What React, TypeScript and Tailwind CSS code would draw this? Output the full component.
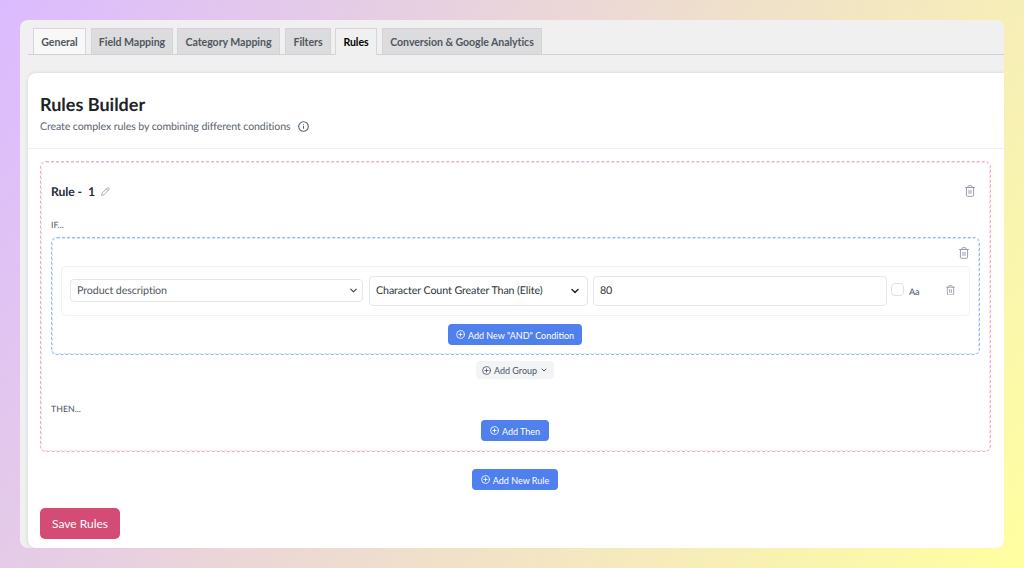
import React from "react";
import clsx from "clsx";
import { ChevronDown } from "lucide-react";

interface Tab {
  label: string;
  className: string;
}

const tabs: Tab[] = [
  { label: "General", className: "w-[53px] mr-[5px] bg-[#f8f8f8] border-[#d6d7da] text-[#50575e]" },
  { label: "Field Mapping", className: "w-[82px] mr-1 bg-[#dcdcde] border-[#d3d4d7] text-[#50575e]" },
  { label: "Category Mapping", className: "w-[103px] mr-[5px] bg-[#dcdcde] border-[#d3d4d7] text-[#50575e]" },
  { label: "Filters", className: "w-[46px] mr-1 bg-[#dcdcde] border-[#d3d4d7] text-[#50575e]" },
  { label: "Rules", className: "w-[42px] mr-[5px] -mb-px h-[27px] bg-[#f0f0f0] border-[#d6d7da] text-black" },
  { label: "Conversion & Google Analytics", className: "w-[160px] bg-[#dcdcde] border-[#d3d4d7] text-[#50575e]" },
];

interface IconProps {
  className?: string;
}

const PlusCircleIcon: React.FC<IconProps> = ({ className }) => (
  <svg viewBox="0 0 18 18" fill="none" stroke="currentColor" strokeWidth="1.7" strokeLinecap="round" className={className}>
    <circle cx="9" cy="9" r="7.8" />
    <path d="M9 5.8v6.4M5.8 9h6.4" />
  </svg>
);

const InfoIcon: React.FC<IconProps> = ({ className }) => (
  <svg viewBox="0 0 22 22" fill="none" stroke="currentColor" strokeWidth="2.2" className={className}>
    <circle cx="11" cy="11" r="9.6" />
    <path d="M11 10v5.6M11 6.4v2" strokeWidth="2.2" />
  </svg>
);

const TrashIcon: React.FC<IconProps> = ({ className }) => (
  <svg
    viewBox="0 0 20 24"
    fill="none"
    stroke="currentColor"
    strokeWidth="1.9"
    strokeLinecap="round"
    strokeLinejoin="round"
    className={className}
  >
    <path d="M1 5h18M6 5V3.2Q6 1.4 7.8 1.4h4.4Q14 1.4 14 3.2V5" />
    <path d="M2.8 5v15.6q0 2 2 2h10.4q2 0 2-2V5M8 10.5v6.5M12 10.5v6.5" />
  </svg>
);

const PencilIcon: React.FC<IconProps> = ({ className }) => (
  <svg viewBox="0 0 18 18" fill="none" stroke="currentColor" strokeWidth="1.5" strokeLinejoin="round" className={className}>
    <path d="M1.2 16.8l1-4.6L12.4 2q1.7-1.5 3.3.2t.2 3.3L5.8 15.7z" />
    <path d="M10.8 3.8l3.3 3.3" />
  </svg>
);

interface BlueButtonProps {
  children: React.ReactNode;
  className?: string;
}

const BlueButton: React.FC<BlueButtonProps> = ({ children, className }) => (
  <button
    className={clsx(
      "flex h-[21px] items-center justify-center gap-[3px] rounded bg-[#4f80ee] text-[9px] leading-none whitespace-nowrap text-white",
      className
    )}
  >
    <PlusCircleIcon className="size-[9px] shrink-0" />
    <span className="pt-px">{children}</span>
  </button>
);

const TabBar = () => (
  <nav className="ml-2 flex h-[35px] items-end border-b border-[#d0d1d4] pl-[5px]">
    {tabs.map((tab) => (
      <button
        key={tab.label}
        className={clsx(
          "flex h-[26px] shrink-0 items-center justify-center border border-b-0 pt-[2px] text-[10.6px] font-bold tracking-[-0.06px] whitespace-nowrap",
          tab.className
        )}
      >
        {tab.label}
      </button>
    ))}
  </nav>
);

const ConditionRow = () => (
  <div className="mx-[9px] flex h-[50px] items-center rounded border border-[#f1f2f4] px-2 text-[10.7px] tracking-[-0.1px]">
    <div className="mb-px flex h-[23px] w-[293px] items-center justify-between rounded border border-[#e3e5e9] pr-[3px] pl-1.5 text-[#50575e]">
      <span className="pt-[2px]">Product description</span>
      <ChevronDown className="size-[11px] text-[#374151]" strokeWidth={2.5} />
    </div>
    <div className="ml-1.5 flex h-[30px] w-[219px] items-center justify-between rounded border border-[#e3e5e9] px-1.5 text-[#2c3338]">
      <span className="pt-px">Character Count Greater Than (Elite)</span>
      <ChevronDown className="size-3 text-[#1f2937]" strokeWidth={3} />
    </div>
    <div className="ml-[5px] flex h-[30px] w-[294px] items-center rounded border border-[#e3e5e9] px-1.5 text-[#2c3338]">
      <span className="pt-px">80</span>
    </div>
    <span className="mb-[3px] ml-1 size-[13px] rounded border border-[#dfe1e5] bg-white" />
    <span className="ml-[5px] w-3 pt-px text-[9.2px] text-[#4b5563]">Aa</span>
    <TrashIcon className="mb-0.5 ml-[25px] h-[10.5px] w-[9px] text-[#9298a6]" />
  </div>
);

const RuleCard = () => (
  <section className="ml-3 h-[291px] w-[951px] rounded-md border border-dashed border-[#f0a9cf] px-2.5 outline-1 -outline-offset-2 outline-[#f9dcec] outline-dashed">
    <div className="flex h-[59px] items-center justify-between pr-[5px]">
      <h2 className="flex items-center text-[12.2px] font-bold tracking-[-0.1px] text-[#1f2937]">
        <span className="pt-px">Rule -</span>
        <span className="ml-1.5 pt-px">1</span>
        <PencilIcon className="ml-1.5 size-[9px] text-[#8f95a3]" />
      </h2>
      <TrashIcon className="mb-px h-3 w-2.5 text-[#9298a6]" />
    </div>
    <p className="h-4 text-[8.8px] leading-[8px] text-[#50575e]">IF...</p>
    <div className="h-[118px] w-[929px] rounded-md border border-dashed border-[#8fbcf8] outline-1 -outline-offset-2 outline-[#cfe2fc] outline-dashed">
      <div className="flex h-[28px] items-center justify-end pt-0.5 pr-2.5">
        <TrashIcon className="h-3 w-2.5 text-[#9298a6]" />
      </div>
      <ConditionRow />
      <div className="mt-2 flex justify-center pr-px">
        <BlueButton className="w-[134px]">Add New "AND" Condition</BlueButton>
      </div>
    </div>
    <div className="mt-1.5 flex justify-center pr-px">
      <button className="flex h-[18px] w-[78px] items-center justify-center gap-[3px] rounded bg-[#f3f4f6] text-[9px] leading-none text-[#4b5563]">
        <PlusCircleIcon className="size-[9px]" />
        <span className="pt-px">Add Group</span>
        <ChevronDown className="size-2" strokeWidth={3} />
      </button>
    </div>
    <p className="mt-[25px] h-4 text-[8.8px] leading-[10px] text-[#50575e]">THEN...</p>
    <div className="flex justify-center pr-px">
      <BlueButton className="w-[68px]">Add Then</BlueButton>
    </div>
  </section>
);

const App: React.FC = () => {
  return (
    <div className="h-[568px] w-[1024px] overflow-hidden bg-[linear-gradient(120deg,#dcbaff,#ffffa0)] p-5 font-['Lato',sans-serif] [text-rendering:geometricPrecision]">
      <div className="h-[528px] overflow-hidden rounded-lg bg-[#f0f0f0]">
        <TabBar />
        <main className="mt-[18px] ml-2 h-[475px] rounded-l-lg bg-white shadow-[0_0_4px_rgba(0,0,0,0.12)]">
          <header className="h-[76px] border-b border-[#f0f0f1] pt-[19px] pl-3">
            <h1 className="text-[18px] leading-[24px] font-bold text-[#1d2327]">Rules Builder</h1>
            <div className="mt-[3px] flex items-center text-[10.6px] leading-[14px] tracking-[-0.1px] text-[#5c636e]">
              <span className="pt-px">Create complex rules by combining different conditions</span>
              <InfoIcon className="ml-[7px] size-[11px]" />
            </div>
          </header>
          <div className="pt-3">
            <RuleCard />
            <div className="mt-[17px] flex w-[974px] justify-center">
              <BlueButton className="w-[86px]">Add New Rule</BlueButton>
            </div>
            <button className="mt-[18px] ml-3 flex h-[31px] w-20 items-center justify-center rounded-[5px] bg-[#d44c76] pt-px text-[12px] text-white">
              Save Rules
            </button>
          </div>
        </main>
      </div>
    </div>
  );
};

export default App;
